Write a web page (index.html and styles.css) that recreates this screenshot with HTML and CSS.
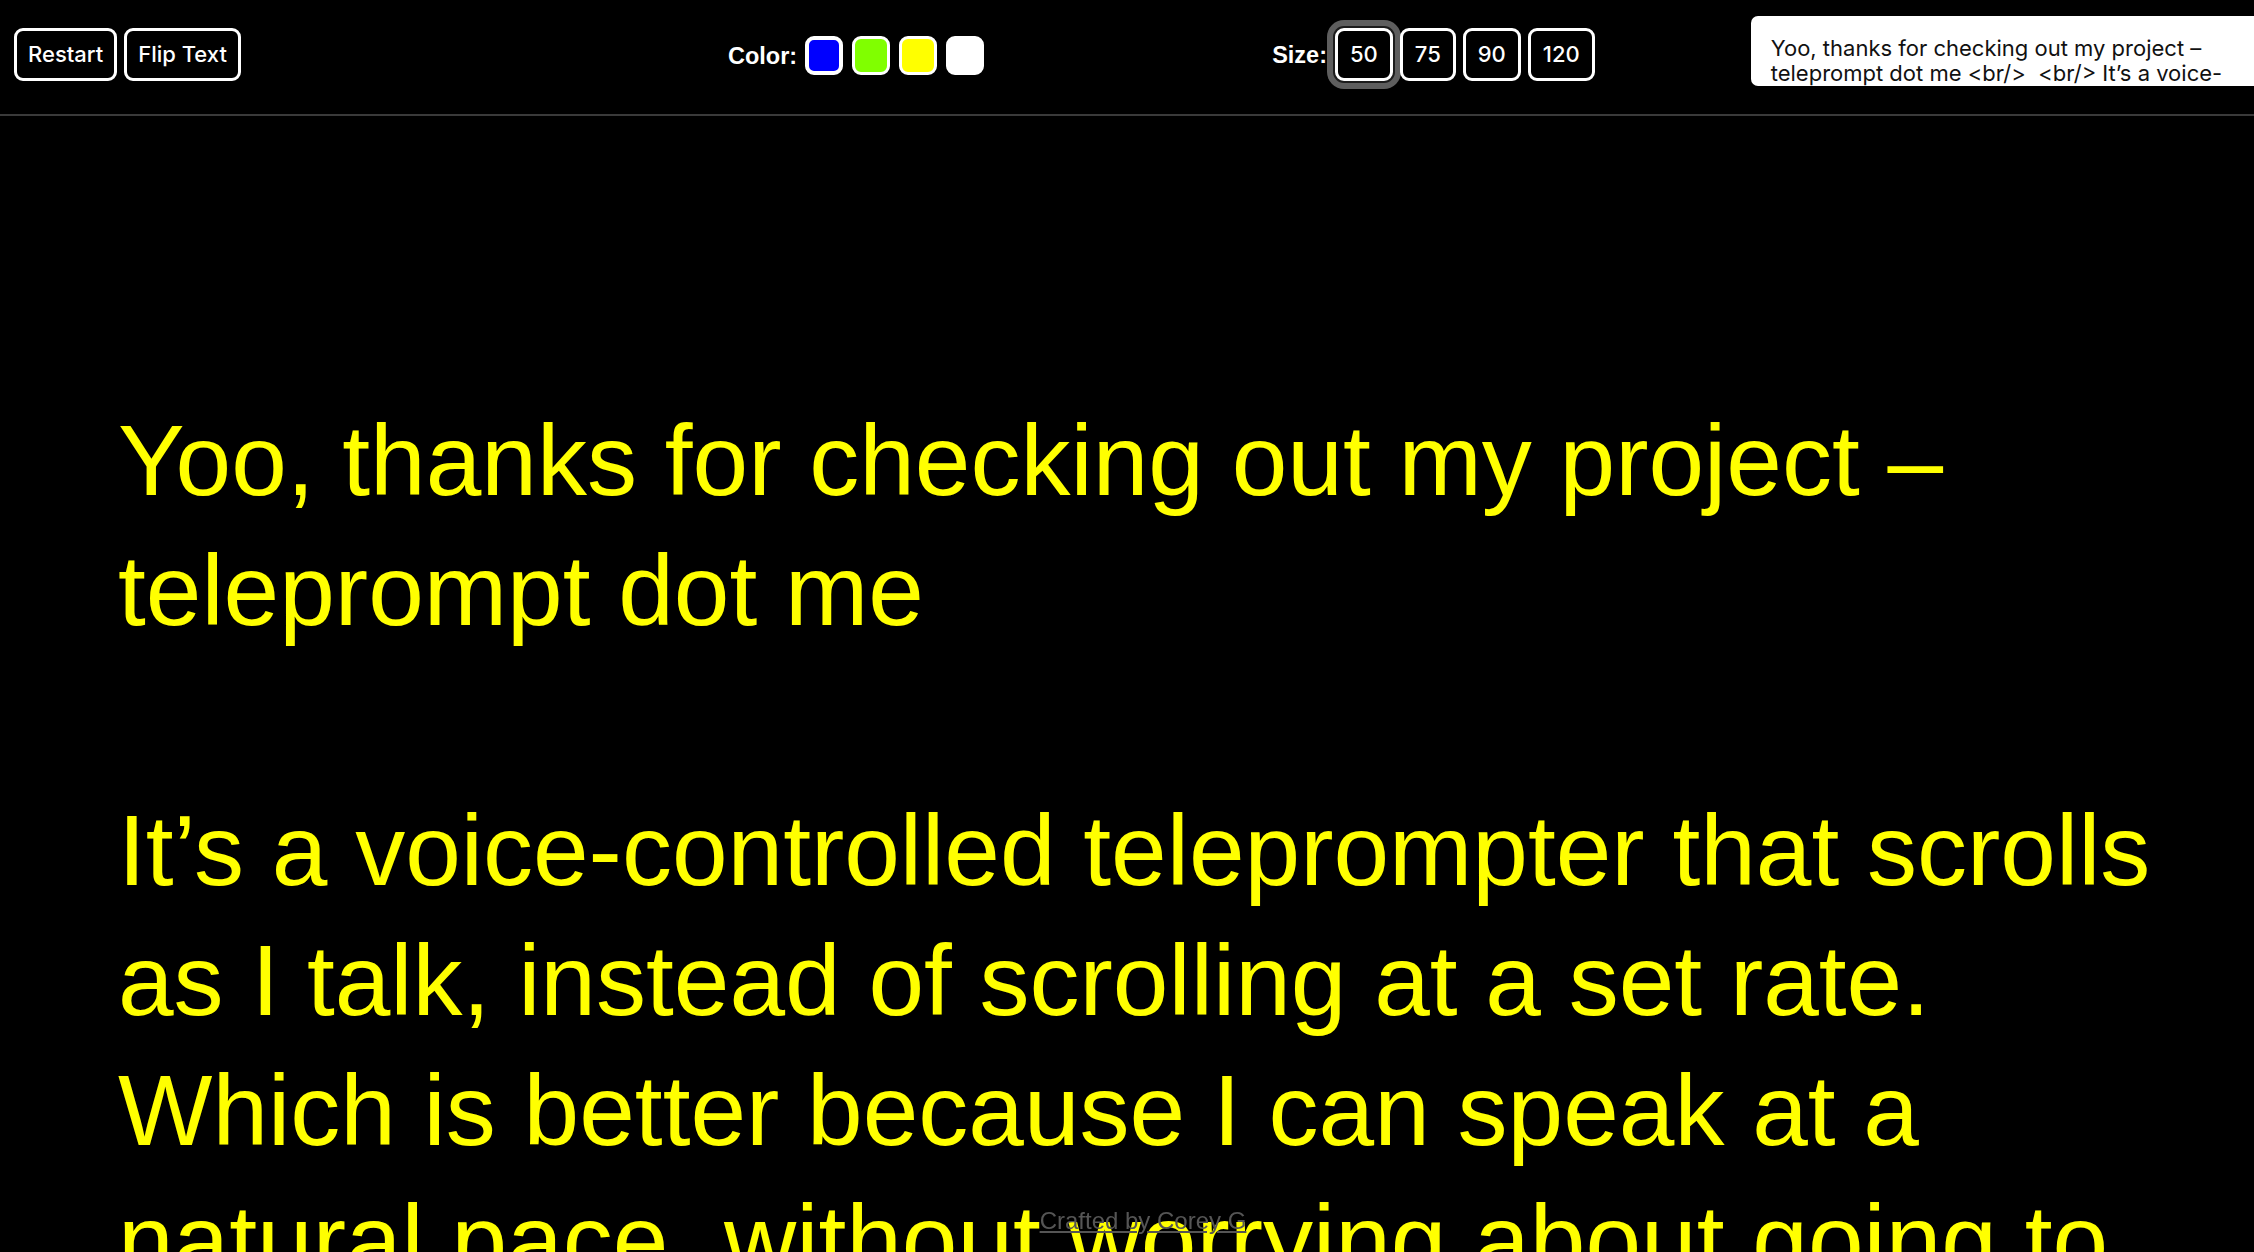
FILE: index.html
```html
<!DOCTYPE html>
<html lang="en">
<head>
    <meta charset="UTF-8">
    <meta name="viewport" content="width=device-width, initial-scale=1.0">
    <title>teleprompt dot me</title>
    <link rel="stylesheet" href="styles.css">
</head>
<body>
    <div class="toolbar">
        <div class="actions">
            <button class="btn">Restart</button>
            <button class="btn">Flip Text</button>
        </div>

        <div class="colors">
            <span class="label">Color:</span>
            <button class="swatch swatch-blue" aria-label="Blue"></button>
            <button class="swatch swatch-green" aria-label="Green"></button>
            <button class="swatch swatch-yellow" aria-label="Yellow"></button>
            <button class="swatch swatch-white" aria-label="White"></button>
        </div>

        <div class="sizes">
            <span class="label">Size:</span>
            <button class="btn btn-size focused">50</button>
            <button class="btn btn-size">75</button>
            <button class="btn btn-size">90</button>
            <button class="btn btn-size">120</button>
        </div>

        <textarea class="script-input">Yoo, thanks for checking out my project – teleprompt dot me &lt;br/&gt;  &lt;br/&gt; It’s a voice-controlled teleprompter that scrolls as I talk, instead of scrolling at a set rate. Which is better because I can speak at a natural pace, without worrying about going to fast or too slow.</textarea>
    </div>

    <div class="prompter">
        <p class="prompt-text">Yoo, thanks for checking out my project – teleprompt dot me<br><br>It’s a voice-controlled teleprompter that scrolls as I talk, instead of scrolling at a set rate. Which is better because I can speak at a natural pace, without worrying about going to fast or too slow.</p>
    </div>

    <div class="credit">
        <a href="#">Crafted by Corey G</a>
    </div>
</body>
</html>
```

FILE: styles.css
```css
html, body {
    margin: 0;
    height: 100%;
    overflow: hidden;
    background-color: #000;
}

body {
    font-family: "Liberation Sans", Arial, sans-serif;
    color: #fff;
}

/* --- barra superior --- */
.toolbar {
    display: flex;
    align-items: center;
    height: 116px;
    padding-left: 14px;
    border-bottom: 2px solid #3a3a3a;
    box-sizing: border-box;
}

.actions, .colors, .sizes {
    display: flex;
    align-items: center;
    flex-shrink: 0;
}

.actions {
    gap: 7px;
    margin-top: -6px;
}

.btn {
    font-family: Inter, "Noto Sans", sans-serif;
    font-size: 22px;
    font-weight: 500;
    color: #fff;
    background-color: #000;
    border: 3px solid #fff;
    border-radius: 9px;
    height: 53px;
    padding: 0 11px;
    box-sizing: border-box;
    cursor: pointer;
}

.label {
    font-weight: bold;
    font-size: 23.5px;
    padding-top: 2px;
}

.colors {
    margin-left: 487px;
    gap: 9px;
    margin-top: -4px;
}

.colors .label {
    margin-right: -1px;
}

.swatch {
    width: 38px;
    height: 39px;
    border: 3px solid #fff;
    border-radius: 9px;
    padding: 0;
    cursor: pointer;
}

.swatch-blue { background-color: #0000ff; border-width: 4px; }
.swatch-green { background-color: #80ff00; }
.swatch-yellow { background-color: #ffff00; }
.swatch-white { background-color: #fff; }

.sizes {
    margin-left: 288px;
    gap: 7px;
    margin-top: -6px;
}

.sizes .label {
    margin-right: 1px;
}

.btn-size {
    padding: 0 12px;
    min-width: 55px;
}

.btn-size.focused {
    box-shadow: 0 0 0 2px #1c1c1c, 0 0 0 8px #5e5e5e;
}

.script-input {
    flex-shrink: 0;
    align-self: flex-start;
    margin-top: 16px;
    margin-left: 156px;
    width: 514px;
    height: 70px;
    padding: 20px 18px 0 20px;
    box-sizing: border-box;
    border: none;
    border-radius: 7px;
    background-color: #fff;
    color: #111;
    font-family: Inter, "Noto Sans", sans-serif;
    font-size: 22px;
    line-height: 25px;
    resize: both;
    overflow: hidden;
}

/* --- texto do teleprompter --- */
.prompter {
    padding: 279px 90px 0 118px;
}

.prompt-text {
    margin: 0;
    color: #ffff00;
    font-size: 100px;
    line-height: 130px;
}

.credit {
    position: fixed;
    left: 0;
    right: 0;
    bottom: 17px;
    padding-left: 32px;
    text-align: center;
    font-size: 24px;
}

.credit a {
    color: #555;
}
```
